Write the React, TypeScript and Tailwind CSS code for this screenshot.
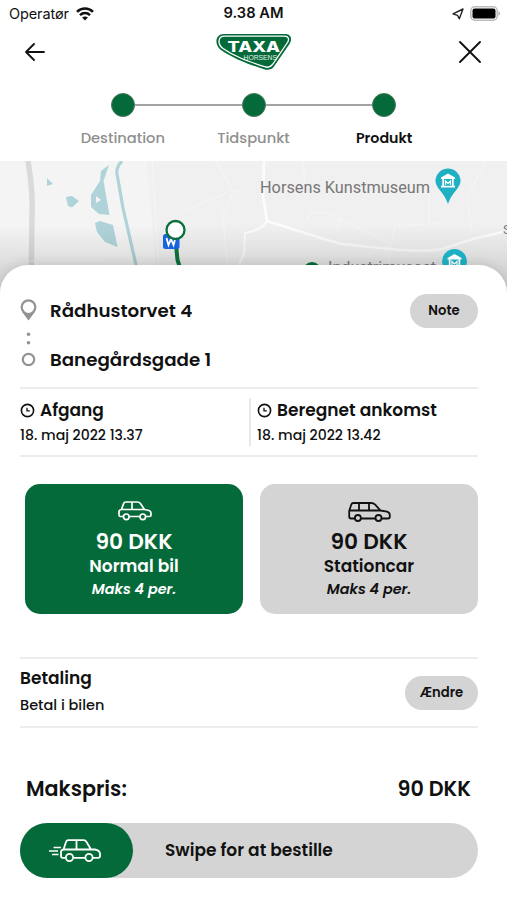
import React from "react";

const green = "#056a39";

function Wifi() {
  return (
    <svg width="18" height="14" viewBox="0 0 18 14" fill="none" stroke="#111" strokeWidth="2.5">
      <path d="M1 4.900C5.400.4 12.600.4 17 4.900" />
      <path d="M4 8.100c2.800-2.800 7.200-2.800 10 0" />
      <path d="M9 13.400 6.100 10.500c1.600-1.500 4.200-1.500 5.800 0z" fill="#111" stroke="none" />
    </svg>
  );
}

function Logo() {
  return (
    <svg width="78" height="38" viewBox="0 0 78 38">
      <path d="M9 1h61c6 0 7.500 5 4.500 10L59 33.500c-2 3-6 4-10 2.700C33 31 19 26 6 17-1 12 0 1 9 1z" fill={green} />
      <path d="M9.500 3.200h60c4 0 5 3 3 6.300L57.500 31.500c-2 2.700-4.700 3.300-8 2.200C34 28.500 20 24 8 15.500 2 11 3 3.200 9.500 3.200z" fill="none" stroke="#fff" strokeWidth="1.300" />
      <text x="12.500" y="19.300" fontFamily="Inter, sans-serif" fontWeight="800" fontSize="14.500" textLength="52.500" lengthAdjust="spacingAndGlyphs" fill="#fff">TAXA</text>
      <text x="28.500" y="26.800" fontFamily="Liberation Sans, sans-serif" fontSize="7.500" textLength="33.500" lengthAdjust="spacingAndGlyphs" fill="#e5f1e9">HORSENS</text>
    </svg>
  );
}

function Clock() {
  return (
    <svg width="15" height="15" viewBox="0 0 15 15" fill="none" stroke="#111" strokeWidth="1.600">
      <circle cx="7.500" cy="7.500" r="6.100" />
      <path d="M7 4.700v3.200h2.800" strokeWidth="1.300" />
    </svg>
  );
}

function MuseumPin({ x, y }: { x: number; y: number }) {
  return (
    <g transform={`translate(${x} ${y})`}>
      <path d="M0-12.500A12.500 12.500 0 0 1 12.500 0C12.500 7 4 11 0 23-4 11-12.500 7-12.500 0A12.500 12.500 0 0 1 0-12.500z" fill="#1fb0c3" />
      <path d="M-7-2v-1.500L0-7.500l7 4V-2zM-5.700-2h1.700v7h-1.700zM4-2h1.700v7H4zM-7 4.800h14v1.600H-7z" fill="#fff" />
      <path d="M-2.500 3.800V0L0 2.500 2.500 0v3.800" stroke="#fff" strokeWidth="1.200" fill="none" />
    </g>
  );
}

function MapView() {
  return (
    <svg className="block" width="507" height="134" viewBox="0 161 507 134">
      <defs>
        <linearGradient id="shade" x1="0" y1="0" x2="0" y2="1">
          <stop offset="0" stopColor="#000" stopOpacity="0" />
          <stop offset="1" stopColor="#000" stopOpacity=".17" />
        </linearGradient>
      </defs>
      <path fill="#f4f4f4" d="M0 161h507v134H0z" />
      <path fill="#f0f0f0" d="M147 161h360v134H158z" />
      <path d="M28 161c3 18 5 33 4 53l-1 81" fill="none" stroke="#dadada" strokeWidth="5.500" />
      <g fill="#afd3d9">
        <path d="M47 178l6 6-6 2zM66 197l6-1 7 5-7 6.500-4-1.500zM109 165l-8 6-1 10-9 14v12l8 7 10.500 1-6-34zM95 223l5-2 13 4 4.500 22-12.500-5-8-10z" />
      </g>
      <path d="M96 196v7l5-3z" fill="#f3f3f3" />
      <path d="M122 161q-6 6-5 13l6 34 13 57 4 30" fill="none" stroke="#afd3d9" strokeWidth="3.200" />
      <g fill="none" stroke="#f5f5f5" strokeWidth="1.200">
        <path d="M216 161l17 30 9 0M233 191l-8 22M152 161l7 109M188 210l40-18M222 208l6 62M305 223l6-10h16l62 30-5 12M342 217l-5 14M387 270l8-44 44-3M303 161l3 35M429 185v37M0 261h105M487 161l-20 35 5 35" />
      </g>
      <g fill="none" stroke="#fcfcfc" strokeWidth="2.600" strokeLinejoin="round">
        <path d="M264 161l-1 35 4 25 60 19 15 4 48 5q35 3 52 0l31-10 34-8" />
        <path d="M267 221l-5 6-9 4-8 2-1 20-5 12" strokeWidth="2" />
      </g>
      <path d="M0 225h507v70H0z" fill="url(#shade)" />
      <g fontFamily="Roboto, sans-serif" fontSize="16" fill="#777">
        <text x="260" y="193" textLength="170" lengthAdjust="spacingAndGlyphs">Horsens Kunstmuseum</text>
        <text x="328" y="273" textLength="108" lengthAdjust="spacingAndGlyphs">Industrimuseet</text>
        <text x="503" y="234" fontSize="13">S</text>
      </g>
      <MuseumPin x={448} y={181} />
      <MuseumPin x={454.5} y={261.500} />
      <path d="M176.500 235v15l1 10 4 12" fill="none" stroke="#0b6f3a" strokeWidth="4" />
      <rect x="163" y="234" width="16.500" height="15" rx="2.500" fill="#1764dc" />
      <path d="M166.500 238l2 7 2.500-6 2.500 6 2-7" stroke="#fff" strokeWidth="1.800" fill="none" />
      <circle cx="175.500" cy="230" r="9" fill="#fff" stroke="#0b6f3a" strokeWidth="2.300" />
      <circle cx="312" cy="271" r="9" fill={green} />
    </svg>
  );
}

function Sedan() {
  return (
    <svg width="34" height="20" viewBox="0 0 34 20" fill="none" stroke="#fff" strokeWidth="1.700" strokeLinejoin="round">
      <path d="M5.400 15.500H2.500Q1 15.500 1 14V10.500Q1 9 3.500 8.500L5.500 2.800Q6 1 8 1H19.500Q21.300 1 22.400 2.500L26.500 8.500 31 9.500Q33 10.200 33 12V14.200Q33 15.500 31.500 15.500H28M11.200 15.500H21.800M3.500 8.500H26.500M14 1V8.500" />
      <circle cx="8.300" cy="15.800" r="2.800" /><circle cx="24.800" cy="15.800" r="2.800" />
    </svg>
  );
}

function Wagon() {
  return (
    <svg width="43" height="20" viewBox="0 0 43 20" fill="none" stroke="#111" strokeWidth="1.800" strokeLinejoin="round">
      <path d="M6.500 16.500H3Q1.200 16.500 1.200 14.500V9L3.200 2.700Q3.700 1 5.500 1H23Q25.500 1 27.200 2.700L32.500 8.500 39 9.700Q41.800 10.500 41.800 13V14.800Q41.800 16.500 40 16.500H33.700M13.200 16.500H27.300M2 8.500H32.500M11 1V8.500M21 1V8.500" />
      <circle cx="9.900" cy="16" r="3" /><circle cx="30.500" cy="16" r="3" />
    </svg>
  );
}

function FastCar() {
  return (
    <svg width="52" height="24" viewBox="0 0 52 24" fill="none" stroke="#fff" strokeWidth="1.800" strokeLinejoin="round">
      <path d="M16.500 18.800H13.500Q12 18.800 12 17V13Q12 11 14.500 10.500L17 3Q17.600 1.200 19.500 1.200H34.500Q36.500 1.200 37.500 3L42 10.500H46Q51 11.500 51 15V17Q51 18.800 49 18.800H44M24.500 18.800H36M14.500 10.500H42M27.500 1.200V10.500" />
      <circle cx="20.500" cy="18.500" r="3.600" /><circle cx="40" cy="18.500" r="3.600" />
      <path d="M4.500 8.500H12M0 12H9M3 15.500H9.500" strokeWidth="1.500" />
    </svg>
  );
}

function Steps() {
  const steps = ["Destination", "Tidspunkt", "Produkt"];
  return (
    <div className="grid h-[85px] grid-cols-3 px-[57.500px]">
      {steps.map((s, i) => (
        <div key={s} className="flex flex-col items-center pt-[16.500px]">
          <div className="flex w-full items-center">
            <span className={`h-[2px] flex-1 ${i ? "bg-[#a3a3a3]" : ""}`} />
            <span className="size-6 rounded-full border border-[#49795d] bg-[#056a39]" />
            <span className={`h-[2px] flex-1 ${i < 2 ? "bg-[#a3a3a3]" : ""}`} />
          </div>
          <span className={`mt-[11px] leading-5 ${i === 2 ? "text-[14.250px] font-semibold text-[#111]" : "text-[14.700px] font-medium text-[#8f8f8f]"}`}>{s}</span>
        </div>
      ))}
    </div>
  );
}

export default function App() {
  return (
    <div className="h-[900px] w-[507px] overflow-hidden bg-white font-['Poppins','Inter',sans-serif] text-[#111]">
      <div className="grid h-[27px] grid-cols-3 items-center px-[9px] font-['Inter',sans-serif] text-[14px]">
        <div className="flex items-center gap-[7px]"><span className="text-[14.500px] tracking-[-0.1px]">Operatør</span><Wifi /></div>
        <span className="text-center text-[14.700px] font-semibold">9.38 AM</span>
        <div className="-mr-[3px] flex items-center justify-end gap-[6px]">
          <svg width="12" height="12" viewBox="0 0 12 12" fill="none" stroke="#222" strokeWidth="1.400" strokeLinejoin="round"><path d="M11 1 7.300 10.800 5.500 7.300 1 5.900z" /></svg>
          <svg width="31" height="15" viewBox="0 0 31 15"><rect x=".8" y=".8" width="26.400" height="13.400" rx="4" fill="#fff" stroke="#bbb" strokeWidth="1.500" /><rect x="2.500" y="2.500" width="23" height="10" rx="2" /><path d="M28.500 5q3 2.500 0 5z" fill="#aaa" /></svg>
        </div>
      </div>
      <div className="flex h-[49px] items-center justify-between px-[25px]">
        <svg width="21" height="18" viewBox="0 0 21 18" fill="none" stroke="#111" strokeWidth="1.800" strokeLinecap="round" strokeLinejoin="round"><path d="M9 1 1 9l8 8M1 9h18" /></svg>
        <div className="pl-[4px]"><Logo /></div>
        <svg width="24" height="24" viewBox="0 0 24 24" stroke="#111" strokeWidth="1.900" strokeLinecap="round"><path d="M2 2l20 20M22 2 2 22" /></svg>
      </div>
      <Steps />
      <MapView />
      <main className="relative -mt-[30px] h-[635px] rounded-t-[28px] bg-white pl-[20px] pr-[29px] shadow-[0_-2px_12px_rgba(0,0,0,0.1)]">
        <div className="flex h-[122px] justify-between pt-[29px]">
          <div className="flex">
            <svg width="17" height="74" viewBox="0 0 17 74" fill="none" stroke="#939393" strokeWidth="2.200">
              <path d="M1.800 17.500 8.500 26.500l6.700-9z" fill="#939393" stroke="none" /><circle cx="8.500" cy="13.200" r="6.800" fill="#fff" />
              <circle cx="8.500" cy="40.200" r="1.800" fill="#939393" stroke="none" /><circle cx="8.500" cy="48.800" r="1.800" fill="#939393" stroke="none" />
              <circle cx="8.500" cy="65.500" r="5.700" />
            </svg>
            <div className="ml-[13px] flex flex-col gap-[21px] pt-[2.500px] text-[18.250px] font-semibold leading-7"><span>Rådhustorvet 4</span><span>Banegårdsgade 1</span></div>
          </div>
          <button className="h-[34px] w-[68px] rounded-full bg-[#d4d4d4] text-[13.200px] font-semibold">Note</button>
        </div>
        <div className="flex h-[70px] items-center border-y-2 border-[#ececec]">
          {[["Afgang", "18. maj 2022 13.37"], ["Beregnet ankomst", "18. maj 2022 13.42"]].map(([title, date], i) => (
            <div key={title} className={i ? "h-[48px] border-l-2 border-[#e8e8e8] pl-[6px]" : "h-[48px] w-[229px]"}>
              <div className="flex h-[25px] items-center gap-[5px] text-[17px] font-semibold"><Clock />{title}</div>
              <div className="h-[23px] text-[14.100px] font-medium leading-[25px]">{date}</div>
            </div>
          ))}
        </div>
        <div className="grid grid-cols-2 gap-[17px] pb-[43px] pl-[5px] pt-[27px]">
          {[["Normal bil", "bg-[#056a39] text-white"], ["Stationcar", "bg-[#d4d4d4] text-[#111]"]].map(([name, tone], i) => (
            <div key={name} className={`flex h-[130px] flex-col items-center rounded-[15px] pt-[17px] ${tone}`}>
              <div className={i ? "h-[27px] pt-[1px]" : "h-[27px] pl-[2px]"}>{i ? <Wagon /> : <Sedan />}</div>
              <span className="text-[21.700px] font-semibold leading-[28px]">90 DKK</span>
              <span className="text-[17px] font-semibold leading-[20px]">{name}</span>
              <span className="text-[14.400px] font-semibold italic leading-[26px]">Maks 4 per.</span>
            </div>
          ))}
        </div>
        <div className="flex h-[71px] items-center justify-between border-y-2 border-[#ececec]">
          <div className="flex flex-col pb-[2px]"><span className="text-[17px] font-semibold leading-[28px]">Betaling</span><span className="text-[14.500px] font-medium leading-[27px]">Betal i bilen</span></div>
          <button className="h-[34px] w-[73px] rounded-full bg-[#d4d4d4] text-[13.200px] font-semibold">Ændre</button>
        </div>
        <div className="flex h-[95px] items-center justify-between pl-[6px] pr-[7px] pt-[26px] text-[20.700px] font-semibold"><span>Makspris:</span><span>90 DKK</span></div>
        <div className="flex h-[55px] items-center rounded-full bg-[#d4d4d4]">
          <div className="flex h-full w-[113px] items-center justify-center rounded-full bg-[#056a39] pr-[4px]"><FastCar /></div>
          <span className="ml-[32px] pt-[1px] text-[17px] font-semibold">Swipe for at bestille</span>
        </div>
      </main>
    </div>
  );
}
